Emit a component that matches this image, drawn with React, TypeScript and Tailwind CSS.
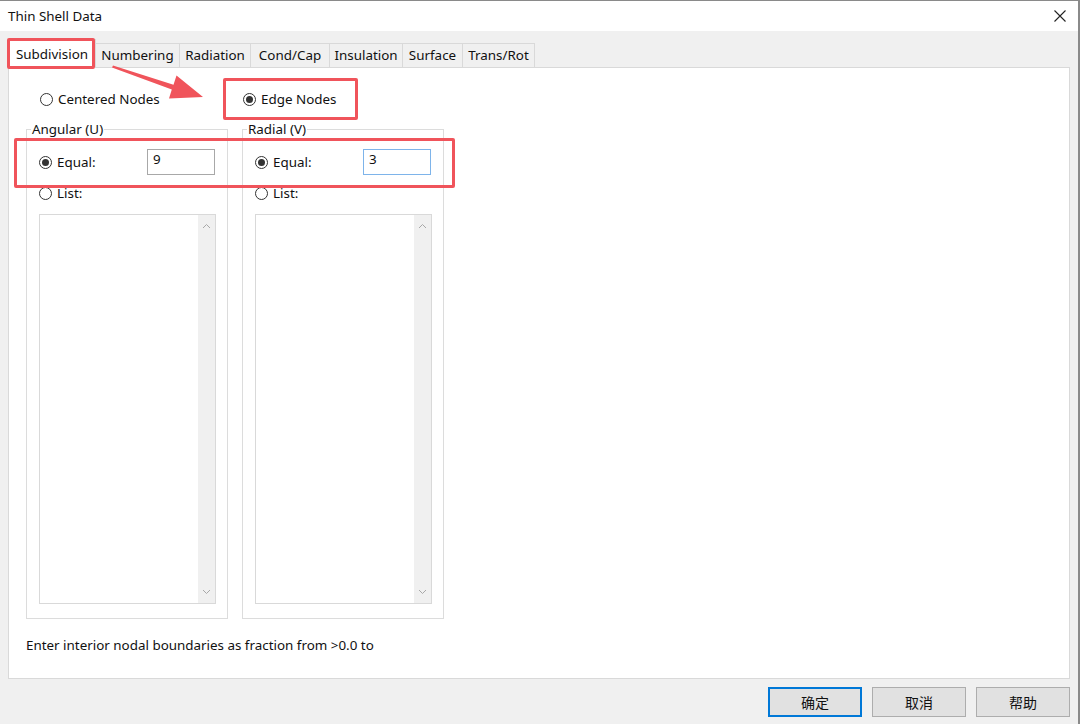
import React from 'react';

const font = { fontFamily: '"Noto Sans", "Noto Sans CJK SC", sans-serif' };

const Radio = ({ checked, label }: { checked?: boolean; label: string }) => (
  <label className="flex h-[20px] items-center gap-[5px] text-[13.4px] text-[#111]">
    <span className="flex h-[13px] w-[13px] items-center justify-center rounded-full border border-[#333] bg-white">
      {checked && <span className="h-[7px] w-[7px] rounded-full bg-[#333]" />}
    </span>
    {label}
  </label>
);

const Chevron = ({ up }: { up?: boolean }) => (
  <svg width="9" height="6" viewBox="0 0 9 6" className="text-[#a8a8a8]">
    <path d={up ? 'M1 5 L4.5 1.5 L8 5' : 'M1 1 L4.5 4.5 L8 1'} fill="none" stroke="currentColor" strokeWidth="1" />
  </svg>
);

const ListBox = () => (
  <div className="flex h-[390px] w-[177px] border border-[#d9d9d9] bg-white">
    <div className="flex-1" />
    <div className="flex w-[17px] flex-col items-center justify-between bg-[#f0f0f0] py-[8px]">
      <Chevron up />
      <Chevron />
    </div>
  </div>
);

const Group = ({ title, value, focused }: { title: string; value: string; focused?: boolean }) => (
  <div className="h-[490px] w-[202px] border border-[#dcdcdc] px-[12px]">
    <div className="-mt-[11px] ml-[-8px] h-[20px] w-fit bg-white px-[1px] text-[13.4px] leading-[20px] text-[#111]">
      {title}
    </div>
    <div className="mt-[10px] flex h-[26px] items-center justify-between">
      <Radio checked label="Equal:" />
      <div
        className={`h-[26px] w-[68px] border bg-white px-[5px] text-[13.4px] leading-[18px] text-[#111] ${
          focused ? 'border-[#7eb4ea]' : 'border-[#a8a8a8]'
        }`}
      >
        {value}
      </div>
    </div>
    <div className="mt-[8px]">
      <Radio label="List:" />
    </div>
    <div className="mt-[11px]">
      <ListBox />
    </div>
  </div>
);

const tabs = [
  { name: 'Numbering', w: 'w-[84px]' },
  { name: 'Radiation', w: 'w-[71px]' },
  { name: 'Cond/Cap', w: 'w-[79px]' },
  { name: 'Insulation', w: 'w-[73px]' },
  { name: 'Surface', w: 'w-[60px]' },
  { name: 'Trans/Rot', w: 'w-[72px]' },
];

const Button = ({ label, primary }: { label: string; primary?: boolean }) => (
  <button
    className={`h-[30px] w-[94px] bg-[#e1e1e1] text-[14px] text-[#111] ${
      primary ? 'border-2 border-[#0078d7]' : 'border border-[#adadad]'
    }`}
  >
    {label}
  </button>
);

export default function App() {
  return (
    <div
      className="relative flex h-[724px] w-[1080px] flex-col overflow-hidden border-t border-r-2 border-[#8a8a8a] bg-[#f0f0f0]"
      style={font}
    >
      {/* title bar */}
      <div className="flex h-[30px] items-center justify-between bg-white pl-[8px] pr-[10px]">
        <span className="text-[13.4px] text-[#111]">Thin Shell Data</span>
        <svg width="12" height="12" viewBox="0 0 12 12" className="mr-[2px]">
          <path d="M0.5 0.5 L11.5 11.5 M11.5 0.5 L0.5 11.5" stroke="#222" strokeWidth="1.1" />
        </svg>
      </div>

      <div className="flex flex-1 flex-col px-[8px] pt-[7px]">
        {/* tab strip */}
        <div className="flex h-[29px] items-end">
          <div className="relative z-10 -mb-px flex h-[29px] w-[88px] items-center justify-center border border-b-0 border-[#d9d9d9] bg-white text-[13.4px] text-[#111]">
            Subdivision
          </div>
          {tabs.map((t) => (
            <div
              key={t.name}
              className={`flex h-[24px] items-center justify-center border border-l-0 border-b-0 border-[#d9d9d9] text-[13.4px] text-[#111] ${t.w}`}
            >
              {t.name}
            </div>
          ))}
        </div>

        {/* tab page */}
        <div className="h-[612px] w-[1062px] border border-[#d9d9d9] bg-white px-[17px]">
          <div className="mt-[21px] flex h-[20px] items-center">
            <div className="ml-[14px] w-[203px]">
              <Radio label="Centered Nodes" />
            </div>
            <Radio checked label="Edge Nodes" />
          </div>
          <div className="mt-[20px] flex gap-[14px]">
            <Group title="Angular (U)" value="9" />
            <Group title="Radial (V)" value="3" focused />
          </div>
          <div className="mt-[16px] h-[20px] text-[13.4px] leading-[20px] text-[#111]">
            Enter interior nodal boundaries as fraction from &gt;0.0 to
          </div>
        </div>

        {/* dialog buttons */}
        <div className="mt-[8px] flex justify-end gap-[10px]">
          <Button label="确定" primary />
          <Button label="取消" />
          <Button label="帮助" />
        </div>
      </div>

      {/* callouts drawn over the dialog */}
      <div className="pointer-events-none absolute left-[7px] top-[37px] z-20 h-[31px] w-[88px] rounded-[2px] border-[3px] border-[#f0545b]" />
      <div className="pointer-events-none absolute left-[223px] top-[77px] z-20 h-[42px] w-[135px] rounded-[2px] border-[3px] border-[#f0545b]" />
      <div className="pointer-events-none absolute left-[14px] top-[137px] z-20 h-[50px] w-[441px] rounded-[2px] border-[3px] border-[#f0545b]" />
      <svg className="pointer-events-none absolute left-0 top-0 z-20" width="1080" height="724">
        <polygon
          points="113,64.5 173.5,83.8 176.5,74.5 203,96 169,97.5 171.8,88.6 112,66.5"
          fill="#f0545b"
        />
      </svg>
    </div>
  );
}
